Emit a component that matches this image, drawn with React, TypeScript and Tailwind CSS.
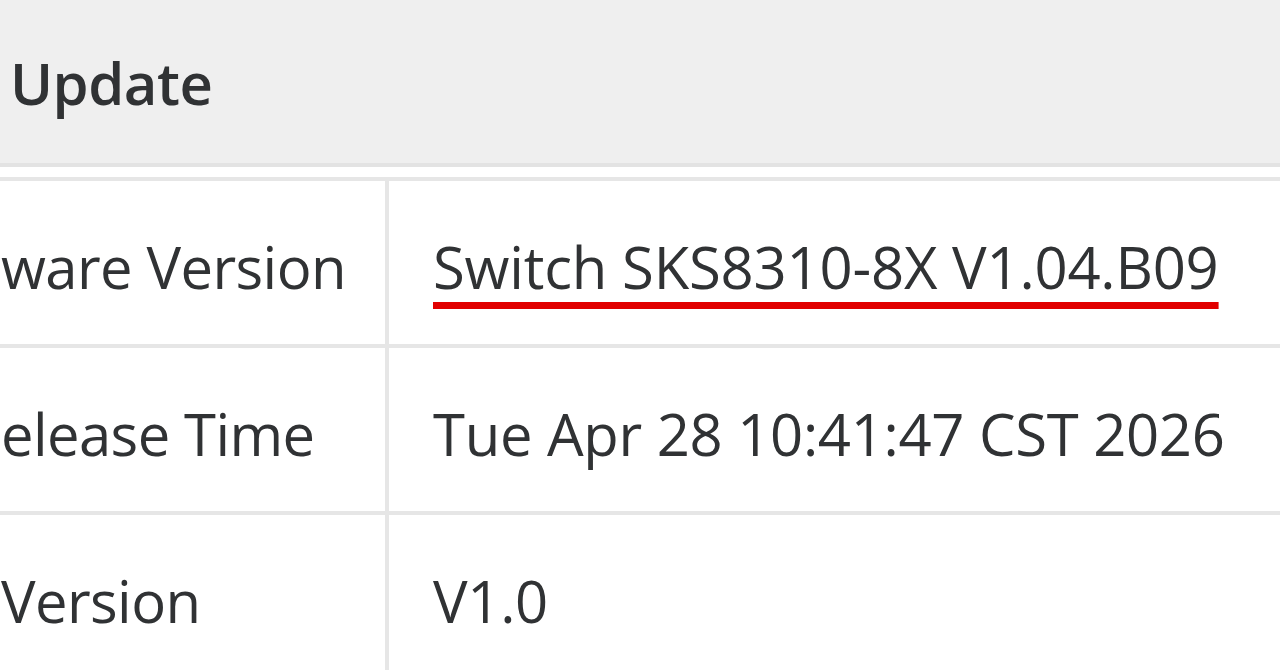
export default function App() {
  const rows = [
    { label: "ware Version", value: "Switch SKS8310-8X V1.04.B09", mark: true },
    { label: "elease Time", value: "Tue Apr 28 10:41:47 CST 2026", mark: false },
    { label: "Version", value: "V1.0", mark: false },
  ];

  return (
    <div
      className="w-[1280px] h-[670px] overflow-hidden bg-white text-[#303234]"
      style={{ fontFamily: '"Open Sans", "Noto Sans", sans-serif' }}
    >
      {/* section header */}
      <div className="h-[163px] bg-[#efefef] flex items-center pl-[10px] pt-[2px]">
        <span className="text-[58px] font-semibold leading-none tracking-[-0.5px]">Update</span>
      </div>
      <div className="h-[4px] bg-[#e3e3e3]" />
      <div className="h-[10px] bg-white" />

      {/* info table */}
      <div className="border-t-4 border-[#e6e6e6]">
        {rows.map((row) => (
          <div
            key={row.label}
            className="flex h-[167px] border-b-4 border-[#e6e6e6]"
          >
            <div className="w-[389px] shrink-0 border-r-4 border-[#e6e6e6] flex items-center pt-[8px] pl-[1px] overflow-hidden whitespace-nowrap">
              <span className="text-[58px] leading-none tracking-[-0.6px]">{row.label}</span>
            </div>
            <div className="flex-1 flex items-center pt-[8px] pl-[44px] whitespace-nowrap">
              <span
                className={
                  row.mark
                    ? "text-[58px] leading-none tracking-[-0.2px] underline decoration-[#e10000] decoration-[7px] underline-offset-[13px]"
                    : "text-[58px] leading-none tracking-[-0.3px]"
                }
              >
                {row.value}
              </span>
            </div>
          </div>
        ))}
      </div>
    </div>
  );
}
